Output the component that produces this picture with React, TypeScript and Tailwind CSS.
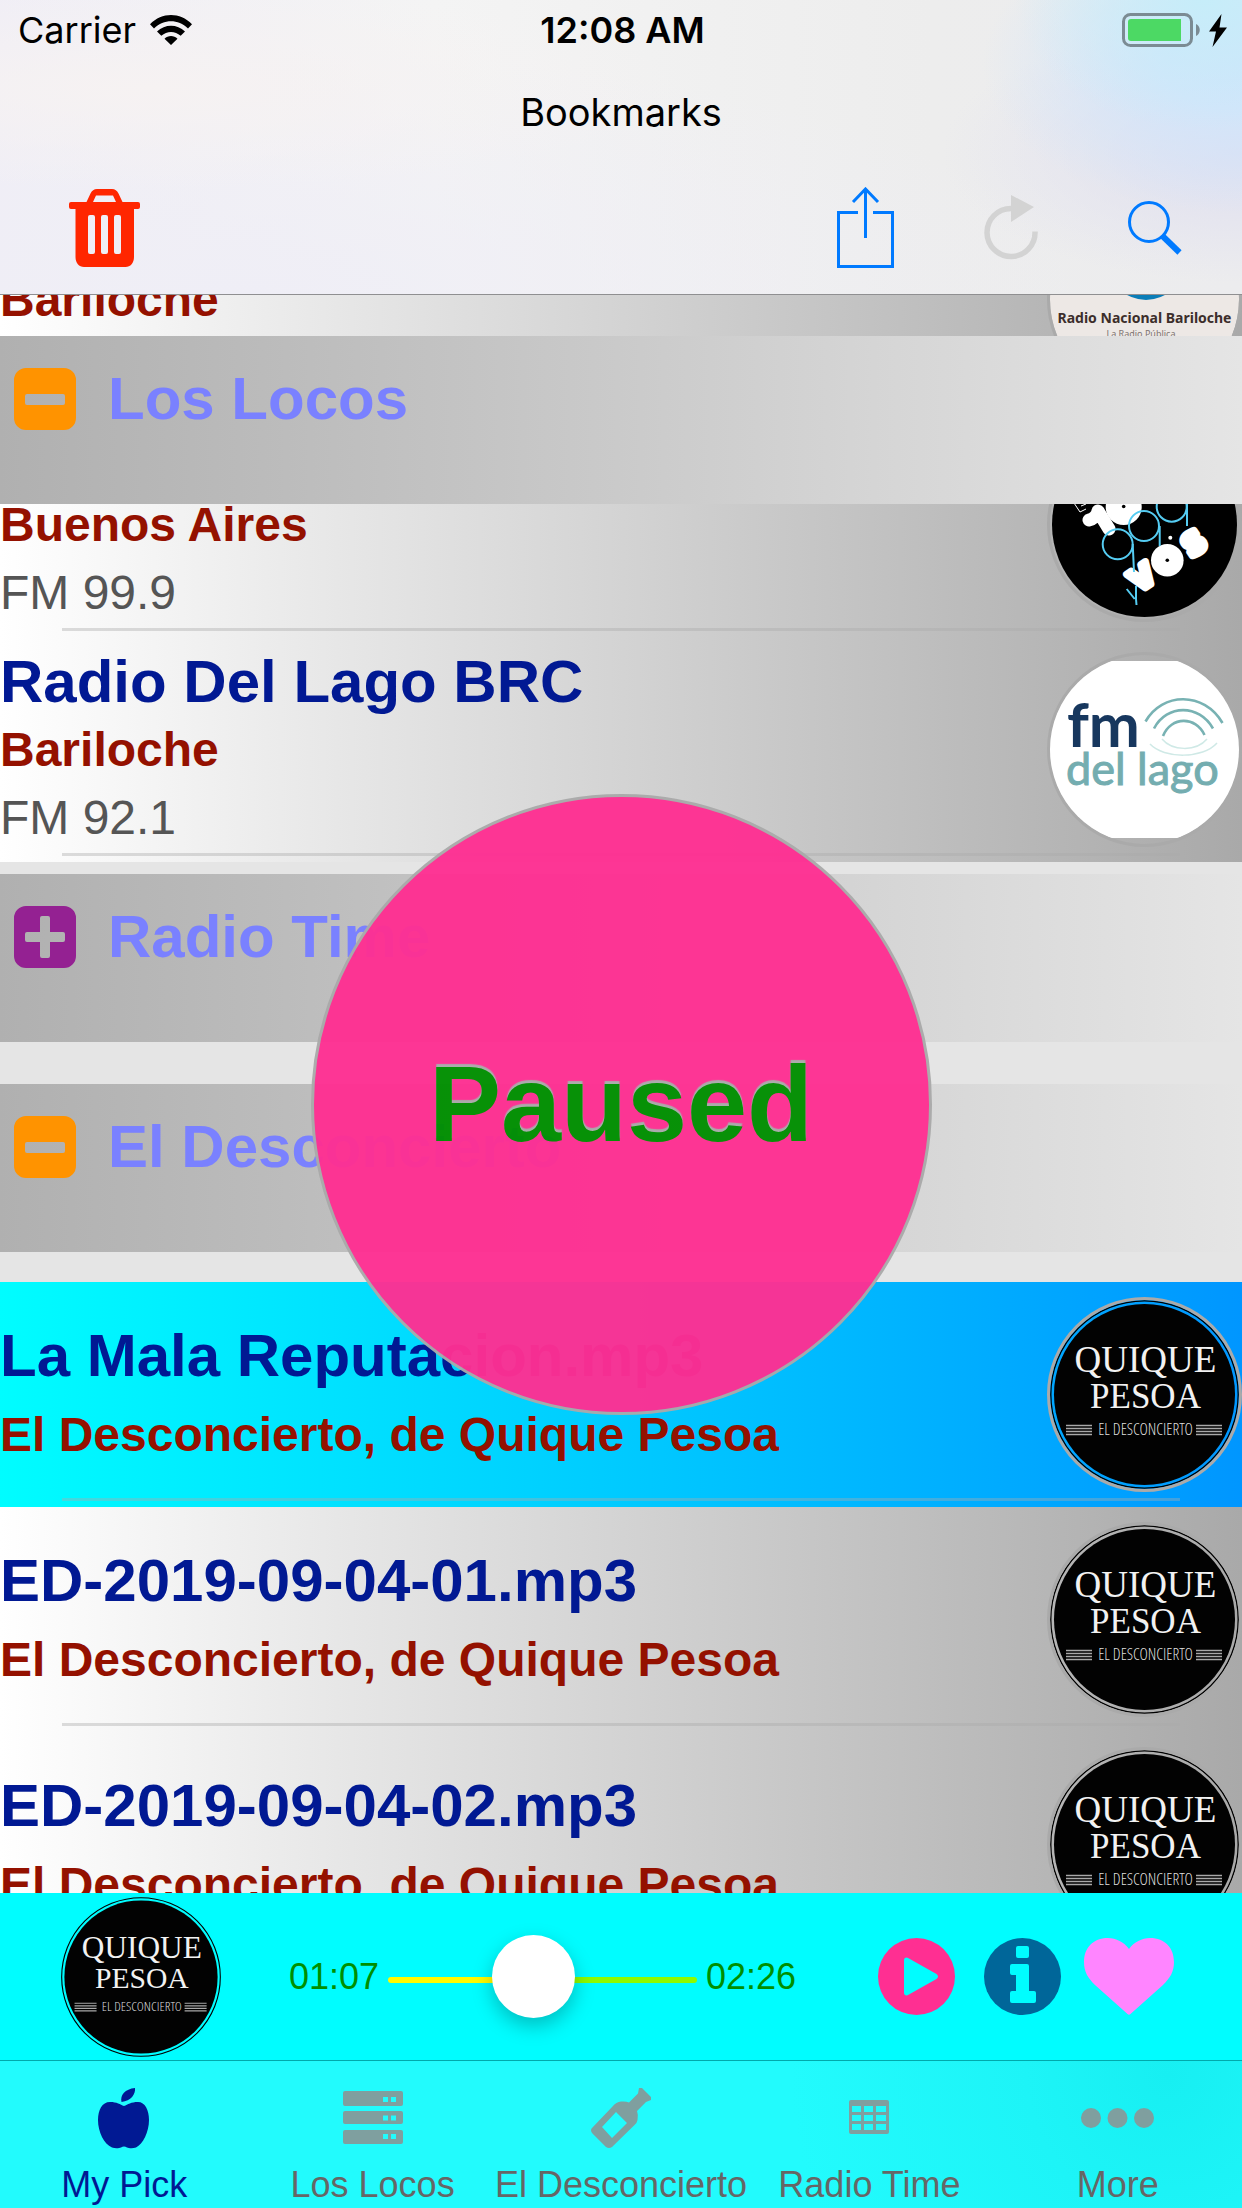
import { useState, type ReactNode } from "react";

function QuiqueLogo({ className }: { className: string }) {
  return (
    <svg viewBox="0 0 189 189" className={className} role="img" aria-label="Quique Pesoa, El Desconcierto">
      <circle cx="94.5" cy="94.5" r="93.7" fill="none" stroke="#000" strokeWidth="1.3" />
      <circle cx="94.5" cy="94.5" r="90.5" fill="#020202" />
      <g fill="#f2f2f2" fontFamily="Liberation Serif, serif" textAnchor="middle">
        <text x="95.5" y="72" fontSize="37">QUIQUE</text>
        <text x="95.5" y="108" fontSize="35">PESOA</text>
      </g>
      <text x="95.5" y="135" fontSize="16" fontWeight="300" fill="#dedede" fontFamily="Liberation Sans Narrow, Open Sans Condensed Light, Open Sans Condensed, Liberation Sans, sans-serif" textAnchor="middle">
        EL DESCONCIERTO
      </text>
      <path d="M16 125.500h26M16 128.500h26M16 131.500h26M16 134.500h26M146 125.500h26M146 128.500h26M146 131.500h26M146 134.500h26" stroke="#a8a8a8" strokeWidth="1.4" />
    </svg>
  );
}

function NacionalLogo() {
  return (
    <svg viewBox="0 0 189 189" className="size-full" role="img" aria-label="Radio Nacional Bariloche">
      <circle cx="94.500" cy="94.500" r="94.500" fill="#ede8e5" />
      <circle cx="96" cy="57" r="38" fill="#0a7db8" />
      <g fill="#3c2e2b" textAnchor="middle" fontFamily="Noto Sans, sans-serif">
        <text x="94.500" y="118" fontSize="14" fontWeight="700">Radio Nacional Bariloche</text>
        <text x="91" y="132" fontSize="9" fill="#7d7471">La Radio Pública</text>
      </g>
    </svg>
  );
}

function VosLogo() {
  return (
    <svg viewBox="0 0 189 189" className="size-full" role="img" aria-label="La 100 99.9 Vos">
      <circle cx="94.500" cy="94.500" r="92.500" fill="#000" />
      <path d="M24 73l6 9 6-3M31 76l5-2" fill="none" stroke="#fff" strokeWidth="1" />
      <circle cx="73.700" cy="77" r="18" fill="#fff" />
      <circle cx="73.700" cy="76.500" r="1.800" fill="#000" />
      <path d="M39 90c4-1 8-4 9-9l11 18" fill="none" stroke="#fff" strokeWidth="13" strokeLinecap="round" strokeLinejoin="round" />
      <g fill="#fff" stroke="#fff" strokeWidth="7" strokeLinejoin="round" fontFamily="DejaVu Sans, sans-serif" fontWeight="700" fontSize="30" textAnchor="middle">
        <text transform="translate(98 156) rotate(-34)">V</text>
        <text transform="translate(150 122) rotate(-34)">S</text>
      </g>
      <circle cx="117.300" cy="130.300" r="16.300" fill="#fff" />
      <circle cx="117.300" cy="130.300" r="1.800" fill="#000" />
      <circle cx="120.300" cy="107.700" r="2" fill="#fff" />
      <g fill="none" stroke="#55ccf2" strokeWidth="2">
        <circle cx="67.700" cy="114.300" r="15" />
        <circle cx="94" cy="96" r="15" />
        <circle cx="121.700" cy="76.700" r="15" />
        <path d="M82.700 114l1.300 28M109.700 96v20M137 74v22M86 156v13l.5 6M76.700 159l8 10" />
      </g>
    </svg>
  );
}

function DelLagoLogo() {
  return (
    <svg viewBox="0 0 189 189" className="size-full" role="img" aria-label="FM Del Lago">
      <path d="M60.500 6h68A94.500 94.500 0 0 1 128.500 183h-68A94.500 94.500 0 0 1 60.500 6z" fill="#fff" />
      <text x="17" y="92" fontSize="61" fontWeight="700" fill="#17375e" fontFamily="Lato, sans-serif">fm</text>
      <text x="16" y="130" fontSize="45" fill="#74adb0" stroke="#74adb0" strokeWidth="1" fontFamily="Lato, sans-serif">del lago</text>
      <g fill="none" stroke="#78b2b3" strokeWidth="2.600">
        <path d="M95.500 66.500C112 37 154 36 172.500 68" />
        <path d="M104 73.500C117 49 149 49 163 73.500" />
        <path d="M113 81C121 61 146 61 154.500 80" />
        <path d="M100 89C114 104 153 104 167 88M112 84C122 96 146 97 157 84" stroke="#cfe9e6" strokeWidth="1.500" />
      </g>
    </svg>
  );
}

type RowProps = {
  title?: string;
  subtitle: string;
  detail?: string;
  station?: boolean;
  logo: ReactNode;
  active?: boolean;
  className?: string;
};

function Row({ title, subtitle, detail, station, logo, active, className = "" }: RowProps) {
  return (
    <li
      className={`relative flex h-[225px] shrink-0 items-center justify-between bg-linear-to-r ${
        active ? "from-[#00fdff] to-[#0096ff]" : "from-white to-[#a9a9a9]"
      } ${className}`}
    >
      <div className={`flex h-full flex-col whitespace-nowrap ${station ? "pt-[9px]" : "gap-[11px] pt-[38px]"}`}>
        <h3 className="min-h-[72px] text-[60px] leading-[72px] font-bold text-[#011993]">{title}</h3>
        <p className="text-5xl leading-[64px] font-bold text-[#941100]">{subtitle}</p>
        {detail && <p className="text-5xl leading-[72px] text-[#555]">{detail}</p>}
      </div>
      <div className="size-[195px] shrink-0 overflow-hidden rounded-full border-3 border-[#aaa]">{logo}</div>
      <div className="absolute right-[62px] bottom-[6px] left-[62px] h-[3px] bg-[#aaa]/40" />
    </li>
  );
}

function SectionHeader({ title, open, onToggle }: { title: string; open: boolean; onToggle: () => void }) {
  return (
    <div className="flex h-[168px] shrink-0 items-start bg-linear-to-r from-[#b0b0b0] to-[#e5e5e5] pt-[27px] pl-3.5">
      <button type="button" onClick={onToggle} aria-expanded={open} className="flex items-center gap-8">
        <svg viewBox="0 0 62 62" className="size-[62px]" aria-hidden="true">
          <path
            fillRule="evenodd"
            fill={open ? "#ff9300" : "#942192"}
            d={
              open
                ? "M12 0h38a12 12 0 0 1 12 12v38a12 12 0 0 1-12 12H12A12 12 0 0 1 0 50V12A12 12 0 0 1 12 0zM13 26a2 2 0 0 0-2 2v7a2 2 0 0 0 2 2h36a2 2 0 0 0 2-2v-7a2 2 0 0 0-2-2z"
                : "M12 0h38a12 12 0 0 1 12 12v38a12 12 0 0 1-12 12H12A12 12 0 0 1 0 50V12A12 12 0 0 1 12 0zM28 10a2 2 0 0 0-2 2v14H13a2 2 0 0 0-2 2v6a2 2 0 0 0 2 2h13v14a2 2 0 0 0 2 2h6a2 2 0 0 0 2-2V36h13a2 2 0 0 0 2-2v-6a2 2 0 0 0-2-2H36V12a2 2 0 0 0-2-2z"
            }
          />
        </svg>
        <span className="text-[60px] leading-[72px] font-bold whitespace-nowrap text-[#7a81ff]">{title}</span>
      </button>
    </div>
  );
}

function Header() {
  return (
    <header className="shrink-0 border-b border-[#8f8f91] bg-[#efeff0] bg-[radial-gradient(ellipse_190px_130px_at_97%_0%,#c6edf9_0%,#c8edf900_100%),radial-gradient(ellipse_260px_150px_at_100%_22%,#cfe4fb_0%,#d2e5fa_30%,#dde6f500_100%),radial-gradient(ellipse_300px_130px_at_100%_52%,#dfdff0_0%,#e2e2f000_100%),radial-gradient(ellipse_at_12%_30%,#f6f2f2_0%,#f4f2f200_35%),radial-gradient(ellipse_at_20%_100%,#efeef6_0%,#efeef600_60%),linear-gradient(90deg,#f0eef6_0%,#f4f4f4_35%,#ededed_75%,#ececee_100%)] font-[Inter,sans-serif] text-black">
      <div className="grid h-15 grid-cols-[1fr_auto_1fr] items-center pr-[15px] pl-[18px]">
        <div className="flex items-center gap-3.5">
          <span className="text-4xl leading-10">Carrier</span>
          <svg viewBox="0 0 42 30" className="h-[30px] w-[42px]" aria-label="Wi-Fi">
            <path d="M0 9.200C12-3 30-3 42 9.200L38 13.500C28 3.800 14 3.800 4 13.500zM7 16.500C15 8.700 27 8.700 35 16.500L30.700 20.800C25 15.600 17 15.600 11.300 20.800zM14.500 23.700C18 20.200 24 20.200 27.500 23.700L21 30z" />
          </svg>
        </div>
        <time className="text-4xl leading-10 font-semibold">12:08 AM</time>
        <svg viewBox="0 0 105 34" className="h-[34px] w-[105px] justify-self-end" aria-label="Battery charging">
          <rect x="1.500" y="1.500" width="68" height="31" rx="7" fill="none" stroke="#7b8b93" strokeWidth="3" />
          <path d="M9 6h50v22H9a3 3 0 0 1-3-3V9a3 3 0 0 1 3-3z" fill="#4cd964" />
          <path d="M74 11c5 2 5 10 0 12z" fill="#7b8b93" />
          <path d="M99.500 1L87 18.500h7L90.500 34 105 14.500h-7.500z" />
        </svg>
      </div>
      <h1 className="flex h-[104px] items-center justify-center text-[38px] leading-[46px]">Bookmarks</h1>
      <div className="flex h-[130px] items-center justify-between pr-[60px] pb-[3px] pl-[69px]">
        <button type="button" aria-label="Delete">
          <svg viewBox="0 0 71 78" className="h-[78px] w-[71px]">
            <path
              fill="#ff2600"
              fillRule="evenodd"
              d="M17.500 13L21.500 4.500C23 1.500 25 0 28 0h15c3 0 5 1.500 6.500 4.500L53.500 13H69a2 2 0 0 1 2 2v3a2 2 0 0 1-2 2h-4v48c0 6-3.500 10-8.500 10H15c-5 0-8.500-4-8.500-10V20H2a2 2 0 0 1-2-2v-3a2 2 0 0 1 2-2zM24 13h23l-3-6.500H27zM21 26a2 2 0 0 0-2 2v35a2 2 0 0 0 2 2h3a2 2 0 0 0 2-2V28a2 2 0 0 0-2-2zM34 26a2 2 0 0 0-2 2v35a2 2 0 0 0 2 2h3a2 2 0 0 0 2-2V28a2 2 0 0 0-2-2zM47 26a2 2 0 0 0-2 2v35a2 2 0 0 0 2 2h3a2 2 0 0 0 2-2V28a2 2 0 0 0-2-2z"
            />
          </svg>
        </button>
        <div className="flex items-center gap-[90px]">
          <button type="button" aria-label="Share">
            <svg viewBox="0 0 57 81" className="h-[81px] w-[57px]" fill="none" stroke="#007aff" strokeWidth="3">
              <path d="M21 25.500H1.500v54h54v-54H36M28.500 51V2M16 15L28.500 2 41 15" />
            </svg>
          </button>
          <button type="button" aria-label="Refresh" disabled>
            <svg viewBox="0 0 54 65" className="h-[65px] w-[54px]">
              <path d="M27 13.500A24 24 0 1 0 51 36.500" fill="none" stroke="#d3d3d3" strokeWidth="5.500" />
              <path d="M27 0v27l23-15z" fill="#d3d3d3" />
            </svg>
          </button>
          <button type="button" aria-label="Search">
            <svg viewBox="0 0 54 54" className="size-[54px]" fill="none" stroke="#007aff">
              <circle cx="21" cy="21" r="19.500" strokeWidth="3" />
              <path d="M34.500 35L51.500 51.500" strokeWidth="6" />
            </svg>
          </button>
        </div>
      </div>
    </header>
  );
}

function Player() {
  const [position, setPosition] = useState(67);
  return (
    <section aria-label="Player" className="flex h-[167px] shrink-0 items-center bg-[#00fdff] pr-[68px] pl-[61px] text-4xl leading-10 text-[#008f00]">
      <QuiqueLogo className="size-40 shrink-0" />
      <span className="ml-[68px]">01:07</span>
      <input
        type="range"
        aria-label="Position"
        min={0}
        max={146}
        value={position}
        onChange={(e) => setPosition(Number(e.target.value))}
        className="mx-[9px] h-[90px] min-w-0 flex-1 appearance-none bg-transparent pt-[7px] [&::-webkit-slider-runnable-track]:h-[6px] [&::-webkit-slider-runnable-track]:rounded-full [&::-webkit-slider-runnable-track]:bg-[linear-gradient(90deg,#fffb00_47%,#8efa00_47%)] [&::-webkit-slider-thumb]:-mt-[42px] [&::-webkit-slider-thumb]:size-[83px] [&::-webkit-slider-thumb]:appearance-none [&::-webkit-slider-thumb]:rounded-full [&::-webkit-slider-thumb]:bg-white [&::-webkit-slider-thumb]:shadow-[0_8px_20px_rgba(0,0,0,0.25)]"
      />
      <span>02:26</span>
      <button type="button" aria-label="Play" className="ml-[82px]">
        <svg viewBox="0 0 77 77" className="size-[77px]">
          <path
            fillRule="evenodd"
            fill="#ff2f92"
            d="M38.500 0a38.500 38.500 0 1 1 0 77 38.500 38.500 0 1 1 0-77zM30.500 20.200C28.500 18.800 26 19.500 26 22v33c0 2.500 2.500 3.200 4.500 1.800L58.500 41c2-1.300 2-3.700 0-5z"
          />
        </svg>
      </button>
      <button type="button" aria-label="Info" className="ml-[29px]">
        <svg viewBox="0 0 77 77" className="size-[77px]">
          <circle cx="38.500" cy="38.500" r="38.500" fill="#006699" />
          <path
            fill="#00fdff"
            d="M34 8h9a2 2 0 0 1 2 2v8a2 2 0 0 1-2 2h-9a2 2 0 0 1-2-2v-8a2 2 0 0 1 2-2zM28 26h15a2 2 0 0 1 2 2v25h5a2 2 0 0 1 2 2v8a2 2 0 0 1-2 2H28a2 2 0 0 1-2-2v-8a2 2 0 0 1 2-2h4V37h-4a2 2 0 0 1-2-2v-7a2 2 0 0 1 2-2z"
          />
        </svg>
      </button>
      <button type="button" aria-label="Favorite" className="ml-[23px]">
        <svg viewBox="0 0 90 77" className="h-[77px] w-[90px]">
          <path fill="#ff85ff" d="M45 11C50 4 58 0 66 0c15 0 24 10 24 24 0 10-4 16-11 23L46.500 76q-1.500 1.500-3 0L11 47C4 40 0 34 0 24 0 10 9 0 24 0c8 0 16 4 21 11z" />
        </svg>
      </button>
    </section>
  );
}

const tabs: { label: string; icon: ReactNode }[] = [
  {
    label: "My Pick",
    icon: (
      <path d="M41 0c.8 6-4 13-13.500 14C26 7 31 1 41 0zM30 18c4-1.500 7-4 14-4 7 0 11 8 11 18 0 12-6 24-13 27.500-3 1-7 .8-9 0q-3-1.800-6 0c-2 .8-6 1-9 0C10 56 4 44 4 32c0-10 4-18 12-18 7 0 10 2.500 14 4z" />
    ),
  },
  {
    label: "Los Locos",
    icon: (
      <path
        fillRule="evenodd"
        d="M2 3h56a2 2 0 0 1 2 2v11a2 2 0 0 1-2 2H2a2 2 0 0 1-2-2V5a2 2 0 0 1 2-2zM2 23h56a2 2 0 0 1 2 2v9a2 2 0 0 1-2 2H2a2 2 0 0 1-2-2v-9a2 2 0 0 1 2-2zM2 42h56a2 2 0 0 1 2 2v10a2 2 0 0 1-2 2H2a2 2 0 0 1-2-2V44a2 2 0 0 1 2-2zM40 9v5h5V9zM48 9v5h5V9zM40 27.500v5h5v-5zM48 27.500v5h5v-5zM40 46v5h5v-5zM48 46v5h5v-5z"
      />
    ),
  },
  {
    label: "El Desconcierto",
    icon: (
      <path
        fillRule="evenodd"
        d="M48 0h3l9 9v3l-5 2-9 9q1.500 4 .5 9-.5 3-3 5L21 59q-3 2-6 0L1 45q-2-3 0-5l21-22q3-4 8-4.500 5-.5 8 1l9-9zM25 24L11 39l10 11 15-15z"
      />
    ),
  },
  {
    label: "Radio Time",
    icon: (
      <path
        fillRule="evenodd"
        d="M12 12h36a2 2 0 0 1 2 2v30a2 2 0 0 1-2 2H12a2 2 0 0 1-2-2V14a2 2 0 0 1 2-2zM13 18v6h9v-6zM25 18v6h9v-6zM37 18v6h10v-6zM13 27v6h9v-6zM25 27v6h9v-6zM37 27v6h10v-6zM13 36v6h9v-6zM25 36v6h9v-6zM37 36v6h10v-6z"
      />
    ),
  },
  {
    label: "More",
    icon: (
      <>
        <circle cx="3" cy="30" r="10" />
        <circle cx="29.500" cy="30" r="10" />
        <circle cx="56" cy="30" r="10" />
      </>
    ),
  },
];

function TabBar() {
  return (
    <nav className="grid h-[148px] shrink-0 grid-cols-5 border-t border-[#00a9ab] bg-[radial-gradient(circle_at_94%_10%,#17eff2_0%,#1df4f7_12%,#22fbfd_32%)]">
      {tabs.map((tab, i) => (
        <button
          key={tab.label}
          type="button"
          aria-current={i === 0 ? "page" : undefined}
          className="flex min-w-0 flex-col items-center gap-[17px] pt-[27px]"
        >
          <svg viewBox="0 0 60 60" className={`size-15 overflow-visible fill-current ${i === 0 ? "text-[#011993]" : "text-[#7f9f9f]"}`} aria-hidden="true">
            {tab.icon}
          </svg>
          <span className={`text-4xl leading-10 whitespace-nowrap ${i === 0 ? "text-[#011993]" : "text-[#666]"}`}>{tab.label}</span>
        </button>
      ))}
    </nav>
  );
}

export default function App() {
  const [open, setOpen] = useState({ locos: true, time: false, desconcierto: true });
  const quique = <QuiqueLogo className="size-full" />;
  return (
    <div className="relative flex h-screen flex-col overflow-hidden bg-[#e5e5e5] font-['Liberation_Sans',Arial,sans-serif]">
      <Header />
      <main className="flex min-h-0 flex-1 flex-col overflow-hidden">
        <ul className="h-[41px] shrink-0 overflow-hidden">
          <Row station className="-mt-27" subtitle="Bariloche" logo={<NacionalLogo />} />
        </ul>
        <SectionHeader title="Los Locos" open={open.locos} onToggle={() => setOpen({ ...open, locos: !open.locos })} />
        {open.locos && (
          <ul className="mb-3 flex shrink-0 flex-col overflow-hidden">
            <Row station className="-mt-23" subtitle="Buenos Aires" detail="FM 99.9" logo={<VosLogo />} />
            <Row station title="Radio Del Lago BRC" subtitle="Bariloche" detail="FM 92.1" logo={<DelLagoLogo />} />
          </ul>
        )}
        <SectionHeader title="Radio Time" open={open.time} onToggle={() => setOpen({ ...open, time: !open.time })} />
        <div className="h-[42px] shrink-0" />
        <SectionHeader title="El Desconcierto" open={open.desconcierto} onToggle={() => setOpen({ ...open, desconcierto: !open.desconcierto })} />
        {open.desconcierto && (
          <ul className="mt-[30px] flex shrink-0 flex-col">
            <Row active title="La Mala Reputacion.mp3" subtitle="El Desconcierto, de Quique Pesoa" logo={quique} />
            <Row title="ED-2019-09-04-01.mp3" subtitle="El Desconcierto, de Quique Pesoa" logo={quique} />
            <Row title="ED-2019-09-04-02.mp3" subtitle="El Desconcierto, de Quique Pesoa" logo={quique} />
          </ul>
        )}
      </main>
      <Player />
      <TabBar />
      <div
        role="status"
        className="pointer-events-none absolute inset-0 m-auto flex aspect-square w-1/2 items-center justify-center rounded-full border-3 border-[#aaa] bg-[#ff2f92] text-[108px] font-bold text-[#008f00] opacity-96 [text-shadow:0_-3px_1px_#aaa]"
      >
        Paused
      </div>
    </div>
  );
}
